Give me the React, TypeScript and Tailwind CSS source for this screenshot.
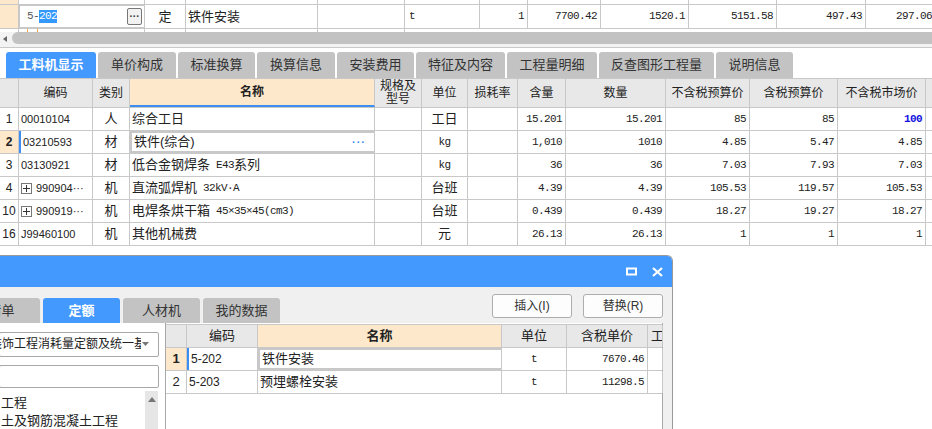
import type { ReactNode } from "react"

const sans = "font-['Liberation_Sans','Noto_Sans_CJK_SC',sans-serif]"
const mono = "font-['Liberation_Mono','Noto_Sans_CJK_SC',monospace] text-[11px] tracking-[-0.6px]"

// main grid column widths
const mainCols = [
  'w-[19px]', 'w-[74px]', 'w-[37px]', 'w-[245px]', 'w-[47px]', 'w-[46px]',
  'w-[50px]', 'w-[48px]', 'w-[100px]', 'w-[84px]', 'w-[88px]', 'w-[88px]', 'w-[40px]',
]
const topCols = [
  'w-[19px]', 'w-[126px]', 'w-[41px]', 'w-[132px]', 'w-[87px]', 'w-[75px]',
  'w-[48px]', 'w-[73px]', 'w-[88px]', 'w-[88px]', 'w-[89px]', 'w-[70px]',
]
const dlgCols = ['w-[21px]', 'w-[71px]', 'w-[244px]', 'w-[65px]', 'w-[81px]', 'w-[15px]']

const mainTabs = [
  { label: '工料机显示', w: 'w-[90px]', active: true },
  { label: '单价构成', w: 'w-[78px]' },
  { label: '标准换算', w: 'w-[77px]' },
  { label: '换算信息', w: 'w-[78px]' },
  { label: '安装费用', w: 'w-[77px]' },
  { label: '特征及内容', w: 'w-[89px]' },
  { label: '工程量明细', w: 'w-[90px]' },
  { label: '反查图形工程量', w: 'w-[115px]' },
  { label: '说明信息', w: 'w-[77px]' },
]

type Row = {
  n: string
  code: string
  plus?: boolean
  type: string
  name: ReactNode
  unit: string
  unitMono?: boolean
  nums: string[]
  selected?: boolean
}

const rows: Row[] = [
  { n: '1', code: '00010104', type: '人', name: '综合工日', unit: '工日', nums: ['15.201', '15.201', '85', '85', '100'] },
  { n: '2', code: '03210593', type: '材', name: '铁件(综合)', unit: 'kg', unitMono: true, nums: ['1,010', '1010', '4.85', '5.47', '4.85'], selected: true },
  { n: '3', code: '03130921', type: '材', name: <>低合金钢焊条<span className={`${mono} ml-[6px]`}>E43</span>系列</>, unit: 'kg', unitMono: true, nums: ['36', '36', '7.03', '7.93', '7.03'] },
  { n: '4', code: '990904···', plus: true, type: '机', name: <>直流弧焊机<span className={`${mono} ml-[6px]`}>32kV·A</span></>, unit: '台班', nums: ['4.39', '4.39', '105.53', '119.57', '105.53'] },
  { n: '10', code: '990919···', plus: true, type: '机', name: <>电焊条烘干箱<span className={`${mono} ml-[6px]`}>45×35×45(cm3)</span></>, unit: '台班', nums: ['0.439', '0.439', '18.27', '19.27', '18.27'] },
  { n: '16', code: 'J99460100', type: '机', name: '其他机械费', unit: '元', nums: ['26.13', '26.13', '1', '1', '1'] },
]

const cell = 'shrink-0 h-full border-r border-[#c8c8c8] flex items-center overflow-hidden whitespace-nowrap'

function PlusBox() {
  return (
    <span className="inline-flex items-center justify-center w-[11px] h-[11px] border border-[#777] mr-[4px] text-[#333]">
      <svg width="7" height="7" viewBox="0 0 7 7"><path d="M0 3.5h7M3.5 0v7" stroke="#333" strokeWidth="1" /></svg>
    </span>
  )
}

export default function App() {
  return (
    <div className={`relative w-[932px] h-[429px] overflow-hidden bg-white text-[#222] ${sans}`}>
      {/* previous row sliver */}
      <div className="flex h-[4px]">
        {topCols.map((w, i) => (
          <div key={i} className={`${cell} ${w} ${i === 0 ? 'bg-[#fde8cb]' : ''}`} />
        ))}
      </div>

      {/* current quota row */}
      <div className="flex h-[25px] border-y border-[#c8c8c8]">
        <div className={`${cell} ${topCols[0]} bg-[#fde8cb]`} />
        <div className={`${cell} ${topCols[1]} border border-[#3d8ef0] pl-[7px] pr-[2px]`}>
          <span className={`${mono} text-[#555]`}>5-</span>
          <span className={`${mono} bg-[#3399ff] text-white leading-[13px]`}>202</span>
          <span className="ml-auto w-[15px] h-[17px] border border-[#777] rounded-[2px] bg-[#f2f2f2] flex items-center justify-center text-[10px] font-bold text-[#333] leading-none">···</span>
        </div>
        <div className={`${cell} ${topCols[2]} justify-center text-[13px]`}>定</div>
        <div className={`${cell} ${topCols[3]} pl-[2px] text-[13px]`}>铁件安装</div>
        <div className={`${cell} ${topCols[4]}`} />
        <div className={`${cell} ${topCols[5]} pl-[4px] ${mono}`}>t</div>
        {['1', '7700.42', '1520.1', '5151.58', '497.43', '297.06'].map((v, i) => (
          <div key={i} className={`${cell} ${topCols[6 + i]} justify-end pr-[3px] ${mono}`}>{v}</div>
        ))}
      </div>

      {/* next row sliver */}
      <div className="flex h-[3px]">
        <div className={`${cell} w-[19px]`} />
        <div className="shrink-0 w-[9px] h-full border-r border-[#f0a848]" />
        <div className="shrink-0 w-[10px] h-full border-r border-[#f0a848]" />
        <div className={`${cell} w-[107px]`} />
        <div className={`${cell} w-[41px]`} />
        <div className={`${cell} w-[132px]`} />
        <div className={`${cell} w-[87px]`} />
      </div>

      {/* horizontal scrollbar */}
      <div className="flex items-start h-[16px] bg-[#f3f3f3] border-b border-[#c8c8c8]">
        <svg className="mt-[4px] ml-[2px]" width="6" height="6" viewBox="0 0 6 6"><path d="M5 0v6L1 3z" fill="#666" /></svg>
        <div className="ml-[4px] flex-1 h-[12px] bg-[#c2c2c2] rounded-l-[6px]" />
      </div>
      <div className="h-[4px]" />

      {/* tabs */}
      <div className="flex h-[26px] pl-[6px] gap-[2px]">
        {mainTabs.map(t => (
          <div
            key={t.label}
            className={`${t.w} shrink-0 h-full rounded-t-[3px] flex items-center justify-center text-[13px] ${t.active ? 'bg-[#4499ff] text-white font-bold' : 'bg-[#c3c3c3] text-[#333]'}`}
          >
            {t.label}
          </div>
        ))}
      </div>

      {/* material grid */}
      <div className="border-t border-[#c8c8c8]">
        <div className="flex h-[29px] border-b border-[#c8c8c8] bg-[#e8e8e8] text-[12px]">
          {['', '编码', '类别', '名称', '规格及型号', '单位', '损耗率', '含量', '数量', '不含税预算价', '含税预算价', '不含税市场价', ''].map((h, i) => (
            <div
              key={i}
              className={`${cell} ${mainCols[i]} justify-center ${i === 3 ? 'bg-[#fde8cb] font-bold border-b-2 border-b-[#3d8ef0]' : ''}`}
            >
              {i === 4 ? (
                <div className="flex flex-col items-center text-[12px] leading-[13px]">
                  <span>规格及</span>
                  <span>型号</span>
                </div>
              ) : h}
            </div>
          ))}
        </div>
        {rows.map(r => (
          <div key={r.n} className="flex h-[23px] border-b border-[#c8c8c8] text-[12px]">
            <div className={`${cell} ${mainCols[0]} justify-center ${r.selected ? 'bg-[#fde8cb] font-bold' : ''}`}>{r.n}</div>
            <div className={`${cell} ${mainCols[1]} pl-[2px] text-[11px] ${r.selected ? 'border-l-2 border-l-[#3d8ef0]' : ''}`}>
              {r.plus && <PlusBox />}
              {r.code}
            </div>
            <div className={`${cell} ${mainCols[2]} justify-center text-[13px]`}>{r.type}</div>
            <div className={`${cell} ${mainCols[3]} pl-[2px] text-[13px] ${r.selected ? 'border-2 border-[#7d7d7d] pr-[8px]' : ''}`}>
              {r.name}
              {r.selected && <span className="ml-auto text-[#3d8ef0] font-bold text-[11px] tracking-[1px]">···</span>}
            </div>
            <div className={`${cell} ${mainCols[4]}`} />
            <div className={`${cell} ${mainCols[5]} justify-center ${r.unitMono ? mono : 'text-[13px]'}`}>{r.unit}</div>
            <div className={`${cell} ${mainCols[6]}`} />
            {r.nums.map((v, i) => (
              <div
                key={i}
                className={`${cell} ${mainCols[7 + i]} justify-end pr-[3px] ${mono} ${i === 4 && r.n === '1' ? 'text-[#1010e0] font-bold' : ''}`}
              >
                {v}
              </div>
            ))}
            <div className={`${cell} ${mainCols[12]}`} />
          </div>
        ))}
      </div>

      {/* floating quota dialog */}
      <div className="absolute left-0 top-[255px] w-[673px] h-[175px] bg-[#f0f0f0] border-t border-r border-[#9a9a9a] rounded-tr-[6px] overflow-hidden flex flex-col">
        <div className="h-[31px] shrink-0 bg-[#4499ff] flex items-center justify-end pr-[9px] gap-[15px]">
          <svg width="11" height="9" viewBox="0 0 11 9"><rect x="1" y="1.5" width="9" height="6" fill="none" stroke="#fff" strokeWidth="2" /></svg>
          <svg width="11" height="10" viewBox="0 0 11 10"><path d="M1 1l9 8M10 1L1 9" stroke="#fff" strokeWidth="2.2" /></svg>
        </div>

        <div className="h-[36px] shrink-0 flex">
          <div className="flex items-end gap-[3px] ml-[-37px]">
            {['清单', '定额', '人材机', '我的数据'].map(t => (
              <div
                key={t}
                className={`w-[77px] h-[25px] rounded-t-[3px] flex items-center justify-center text-[13px] ${t === '定额' ? 'bg-[#4499ff] text-white font-bold' : 'bg-[#c3c3c3] text-[#333]'}`}
              >
                {t}
              </div>
            ))}
          </div>
          <div className="ml-auto mr-[9px] mt-[7px] flex gap-[11px]">
            {['插入(I)', '替换(R)'].map(b => (
              <div key={b} className="w-[80px] h-[24px] bg-[#fdfdfd] border border-[#adadad] rounded-[3px] flex items-center justify-center text-[12px] text-[#333]">
                {b}
              </div>
            ))}
          </div>
        </div>

        <div className="flex flex-1 min-h-0">
          {/* library tree side */}
          <div className="w-[166px] shrink-0 bg-white border-r border-[#a8a8a8] flex flex-col overflow-hidden">
            <div className="mt-[9px] ml-[-1px] w-[160px] h-[26px] border border-[#a8a8a8] rounded-[2px] flex items-center overflow-hidden">
              <span className="ml-[-10px] text-[12px] whitespace-nowrap w-[151px] shrink-0 overflow-hidden">装饰工程消耗量定额及统一基价表</span>
              <svg className="ml-[1px]" width="7" height="4" viewBox="0 0 7 4"><path d="M0 0h7L3.5 4z" fill="#777" /></svg>
            </div>
            <div className="mt-[8px] ml-[-1px] w-[160px] h-[24px] border border-[#a8a8a8] rounded-[2px]" />
            <div className="mt-[3px] flex flex-1">
              <div className="w-[145px] text-[13px] leading-[18px] pl-[1px] pt-[3px] whitespace-nowrap overflow-hidden">
                <div>工程</div>
                <div>土及钢筋混凝土工程</div>
              </div>
              <div className="w-[13px] bg-[#e6e6e6] flex justify-center pt-[6px]">
                <svg width="8" height="5" viewBox="0 0 8 5"><path d="M0 5h8L4 0z" fill="#777" /></svg>
              </div>
            </div>
          </div>

          {/* quota list grid */}
          <div className="w-[497px] shrink-0 bg-white border-r border-[#a8a8a8]">
            <div className="mt-[1px] border-t border-[#c8c8c8]">
              <div className="flex h-[23px] border-b border-[#c8c8c8] bg-[#e8e8e8] text-[13px]">
                {['', '编码', '名称', '单位', '含税单价', '工'].map((h, i) => (
                  <div key={i} className={`${cell} ${dlgCols[i]} ${i === 5 ? 'pl-[3px]' : 'justify-center'} ${i === 2 ? 'bg-[#fde8cb] font-bold' : ''}`}>{h}</div>
                ))}
              </div>
              {[
                { n: '1', code: '5-202', name: '铁件安装', unit: 't', price: '7670.46', sel: true },
                { n: '2', code: '5-203', name: '预埋螺栓安装', unit: 't', price: '11298.5' },
              ].map(r => (
                <div key={r.n} className="flex h-[23px] border-b border-[#c8c8c8] text-[13px]">
                  <div className={`${cell} ${dlgCols[0]} justify-center ${r.sel ? 'bg-[#fde8cb] font-bold' : ''}`}>{r.n}</div>
                  <div className={`${cell} ${dlgCols[1]} pl-[2px] text-[12px] ${r.sel ? 'border-l-2 border-l-[#3d8ef0]' : ''}`}>{r.code}</div>
                  <div className={`${cell} ${dlgCols[2]} pl-[2px] ${r.sel ? 'border-2 border-[#3d8ef0]' : ''}`}>{r.name}</div>
                  <div className={`${cell} ${dlgCols[3]} justify-center ${mono}`}>{r.unit}</div>
                  <div className={`${cell} ${dlgCols[4]} justify-end pr-[3px] ${mono}`}>{r.price}</div>
                  <div className={`${cell} ${dlgCols[5]}`} />
                </div>
              ))}
            </div>
          </div>
        </div>
      </div>
    </div>
  )
}
